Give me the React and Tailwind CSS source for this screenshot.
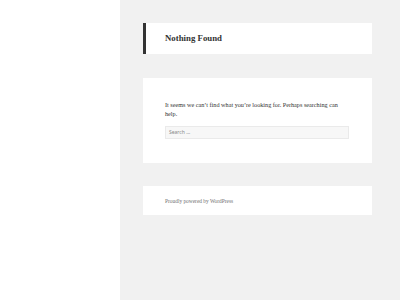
export default function App() {
  return (
    <div className="flex w-[400px] h-[300px] overflow-hidden">
      <div className="w-[120px] shrink-0 bg-white" />
      <div className="flex-1 bg-[#f1f1f1] pt-[23px] pl-[23px] pr-[28px] flex flex-col">
        <div className="h-[31px] bg-white border-l-[3px] border-[#333333] pl-[19px] flex items-center">
          <h1 className="text-[8.8px] font-bold text-[#333333] leading-none" style={{ fontFamily: '"Liberation Serif", serif' }}>Nothing Found</h1>
        </div>
        <div className="mt-[24px] bg-white pt-[23px] pb-[24px] pl-[22px] pr-[23px]">
          <p className="text-[6.2px] leading-[8.7px] text-[#333333]" style={{ fontFamily: '"Liberation Serif", serif' }}>
            It seems we can’t find what you’re looking for. Perhaps searching can help.
          </p>
          <div className="mt-[8px] h-[13px] bg-[#f7f7f7] border border-[#eaeaea] flex items-center pl-[3px]">
            <span className="text-[5px] text-[#888888]" style={{ fontFamily: '"Noto Sans", sans-serif' }}>Search …</span>
          </div>
        </div>
        <div className="mt-[23px] h-[29px] bg-white pl-[22px] flex items-center">
          <span className="text-[5.4px] text-[#707070]" style={{ fontFamily: '"Liberation Serif", serif' }}>Proudly powered by WordPress</span>
        </div>
      </div>
    </div>
  );
}
